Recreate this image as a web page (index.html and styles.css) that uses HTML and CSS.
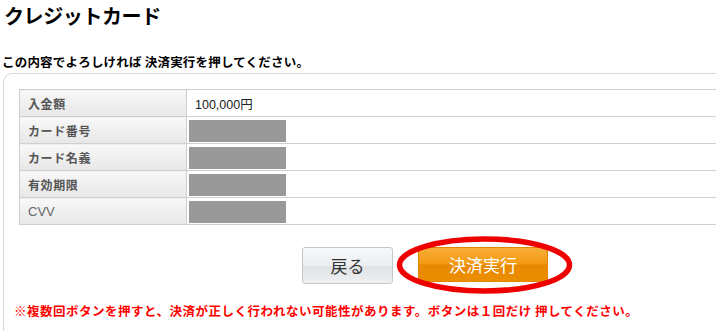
FILE: index.html
```html
<!DOCTYPE html>
<html lang="ja">
<head>
<meta charset="utf-8">
<title>クレジットカード</title>
<link rel="stylesheet" href="styles.css">
</head>
<body>
<div class="page">
  <h1 class="title">クレジットカード</h1>
  <p class="lead">この内容でよろしければ 決済実行を押してください。</p>
  <div class="panel">
    <table class="info">
      <tr><th>入金額</th><td><span class="value">100,000円</span></td></tr>
      <tr><th>カード番号</th><td><span class="mask"></span></td></tr>
      <tr><th>カード名義</th><td><span class="mask"></span></td></tr>
      <tr><th>有効期限</th><td><span class="mask"></span></td></tr>
      <tr><th class="latin">CVV</th><td><span class="mask"></span></td></tr>
    </table>
    <div class="actions">
      <button class="btn btn-back" type="button">戻る</button>
      <div class="submit-wrap">
        <button class="btn btn-submit" type="button">決済実行</button>
        <svg class="circle" width="179" height="61" viewBox="0 0 179 61" aria-hidden="true">
          <ellipse cx="89.5" cy="30" rx="85" ry="26" fill="none" stroke="#ee0000" stroke-width="5.5"/>
        </svg>
      </div>
    </div>
    <p class="note">※複数回ボタンを押すと、決済が正しく行われない可能性があります。ボタンは１回だけ 押してください。</p>
  </div>
</div>
</body>
</html>
```

FILE: styles.css
```css
html, body {
  margin: 0;
  padding: 0;
  background: #ffffff;
  overflow: hidden;
}

.page {
  width: 716px;
  height: 331px;
  overflow: hidden;
  font-family: "Noto Sans CJK JP", "Noto Sans", sans-serif;
  color: #000;
}

.title {
  margin: 0 0 0 4px;
  padding-top: 4px;
  font-size: 20px;
  line-height: 24px;
  font-weight: bold;
  letter-spacing: -0.4px;
}

.lead {
  margin: 26px 0 0 2px;
  font-size: 12.5px;
  line-height: 16px;
  font-weight: bold;
  letter-spacing: 0.2px;
}

.panel {
  margin: 3px 0 0 3px;
  width: 900px;
  height: 400px;
  border-top: 1px solid #d6d6d6;
  border-left: 1px solid #d6d6d6;
  border-top-left-radius: 9px;
  padding-top: 15px;
  box-sizing: border-box;
}

.info {
  width: 812px;
  margin-left: 15px;
  border-collapse: collapse;
  font-size: 12px;
}

.info th,
.info td {
  height: 26px;
  padding: 0;
  border: 1px solid #cfcfcf;
  vertical-align: middle;
  text-align: left;
}

.info th {
  width: 158px;
  padding-left: 8px;
  font-weight: bold;
  color: #555555;
  background: linear-gradient(#f8f8f8, #e7e7e7);
  letter-spacing: 0.6px;
}

.info th.latin {
  font-family: "Liberation Sans", Arial, sans-serif;
  font-weight: normal;
  color: #666;
  font-size: 13px;
  letter-spacing: 0;
}

.info td {
  background: #ffffff;
  padding-left: 2px;
  border-right: none;
}

.value {
  display: inline-block;
  padding-left: 6px;
  font-family: "Liberation Sans", "Noto Sans CJK JP", sans-serif;
  color: #222;
  font-size: 12.5px;
}

.mask {
  display: block;
  width: 97px;
  height: 22px;
  margin-top: 1px;
  background: #999999;
}

.actions {
  width: 812px;
  margin: 22px 0 0 15px;
  display: flex;
  justify-content: center;
  align-items: flex-start;
  gap: 25px;
}

.btn {
  font-family: "Noto Sans CJK JP", sans-serif;
  font-size: 17px;
  font-weight: normal;
  padding: 0;
  margin: 0;
  cursor: pointer;
}

.btn-back {
  width: 91px;
  height: 37px;
  color: #333;
  border: 1px solid #c4c8cc;
  border-radius: 3px;
  background: linear-gradient(#f7f8f9 0%, #eceef0 50%, #dfe3e6 52%, #eef0f2 100%);
}

.submit-wrap {
  position: relative;
}

.btn-submit {
  display: block;
  width: 130px;
  height: 35px;
  color: #ffffff;
  border: 1px solid #e08600;
  border-radius: 2px;
  background: linear-gradient(#f8ad3a 0%, #f39a12 48%, #e88800 52%, #ec8e00 100%);
}

.circle {
  position: absolute;
  left: -23px;
  top: -12px;
  pointer-events: none;
}

.note {
  margin: 19px 0 0 10px;
  font-size: 12.5px;
  line-height: 16px;
  font-weight: bold;
  color: #ff0000;
  letter-spacing: 0.5px;
}
```
